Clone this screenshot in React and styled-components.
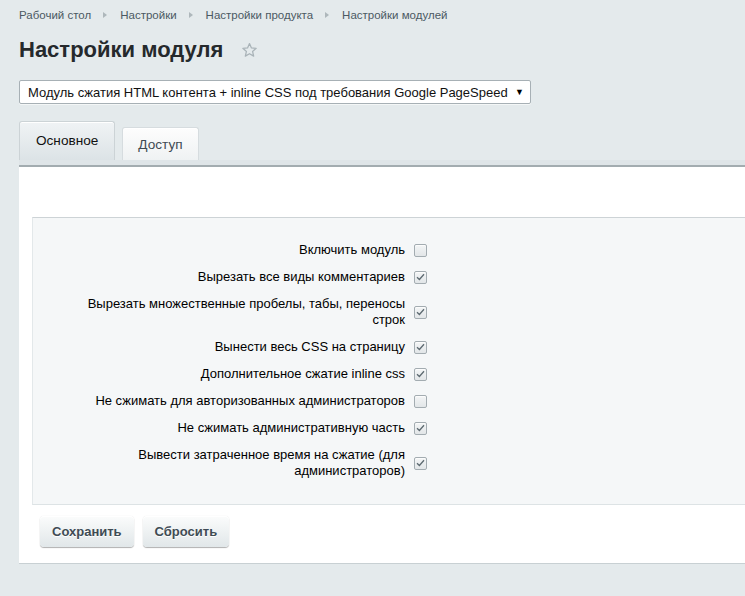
import React from 'react';
import styled, { createGlobalStyle } from 'styled-components';

const GlobalStyle = createGlobalStyle`
  html, body {
    margin: 0;
    padding: 0;
    background: #e4eaec;
    overflow: hidden;
  }
  body {
    font-family: "Liberation Sans", Arial, sans-serif;
    font-size: 13px;
    color: #000;
  }
`;

const Page = styled.div`
  width: 800px;
  padding: 8px 0 0 19px;
  min-height: 596px;
  box-sizing: border-box;
`;

const Crumbs = styled.div`
  display: flex;
  align-items: center;
  height: 14px;
  font-size: 11.5px;
  line-height: 14px;
  color: #4b5963;
`;

const CrumbArrow = styled.span`
  width: 0;
  height: 0;
  margin: 0 13px 0 12px;
  border-top: 3.5px solid transparent;
  border-bottom: 3.5px solid transparent;
  border-left: 4px solid #aeb7bb;
`;

const TitleRow = styled.div`
  display: flex;
  align-items: center;
  margin-top: 14px;
  height: 28px;
  gap: 18px;
`;

const Title = styled.h1`
  margin: 0;
  font-size: 22px;
  font-weight: bold;
  color: #25292c;
  line-height: 28px;
`;

const Select = styled.div`
  margin-top: 16px;
  width: 512px;
  height: 24px;
  box-sizing: border-box;
  border: 1px solid #a7b0b5;
  border-radius: 2px;
  background: #fff;
  display: flex;
  align-items: center;
  justify-content: space-between;
  padding: 0 6px 0 8px;
  font-size: 13px;
  color: #111;
  box-shadow: 0 1px 0 rgba(255, 255, 255, 0.6);
`;

const SelectArrow = styled.span`
  font-size: 9px;
  color: #000;
`;

const Tabs = styled.div`
  display: flex;
  align-items: flex-end;
  gap: 7px;
  margin-top: 17px;
`;

const Tab = styled.div`
  box-sizing: border-box;
  height: ${p => (p.$active ? '39px' : '33px')};
  padding: ${p => (p.$active ? '0 16px' : '0 15px')};
  display: flex;
  align-items: center;
  padding-bottom: ${p => (p.$active ? '2px' : '0')};
  font-size: 13.6px;
  color: ${p => (p.$active ? '#111' : '#3f4b54')};
  border: 1px solid ${p => (p.$active ? '#ccd3d6' : '#d6dcdf')};
  border-bottom: none;
  border-radius: 3px 3px 0 0;
  background: ${p =>
    p.$active
      ? 'linear-gradient(#f0f3f5, #dce3e6)'
      : 'linear-gradient(#fdfdfd, #eff2f3)'};
  box-shadow: inset 0 1px #fff;
`;

const TabStrip = styled.div`
  height: 5px;
  background: #dfe5e8;
  border-bottom: 2px solid #a3acb0;
`;

const Panel = styled.div`
  background: #fff;
  padding: 50px 0 0 13px;
  border-bottom: 1px solid #c8d0d3;
`;

const Form = styled.div`
  background: #f5f7f8;
  border-top: 1px solid #cdd3d6;
  border-left: 1px solid #e3e8ea;
  border-bottom: 1px solid #dde3e5;
  padding: 19px 0 19px;
`;

const Row = styled.div`
  display: flex;
  align-items: center;
  gap: 9px;
  padding: 5px 0 6px 50px;
`;

const Label = styled.div`
  width: 322px;
  text-align: right;
  line-height: 16px;
  font-size: 13px;
  color: #000;
`;

const Box = styled.span`
  width: 13px;
  height: 13px;
  box-sizing: border-box;
  border: 1px solid #a3acb1;
  border-radius: 2px;
  background: linear-gradient(#f3f5f6, #e2e6e8);
  box-shadow: inset 0 1px 1px rgba(255, 255, 255, 0.8);
  display: flex;
  align-items: center;
  justify-content: center;
  flex-shrink: 0;
`;

const Buttons = styled.div`
  display: flex;
  gap: 9px;
  padding: 11px 0 16px 8px;
`;

const Button = styled.button`
  height: 31px;
  padding: 0 12px;
  border: none;
  border-radius: 4px;
  font-family: "Liberation Sans", Arial, sans-serif;
  font-size: 13px;
  font-weight: bold;
  color: #3f4b54;
  text-shadow: 0 1px #fff;
  background: linear-gradient(#fbfcfc, #e1e7e9);
  box-shadow: 0 0 1px rgba(0, 0, 0, 0.15), 0 1px 1px rgba(0, 0, 0, 0.3),
    inset 0 1px #fff;
`;

const Star = () => (
  <svg width="17" height="16" viewBox="0 0 24 23">
    <path
      d="M12 2.2l2.8 6.3 6.8.6-5.2 4.5 1.6 6.7L12 16.8l-6 3.5 1.6-6.7-5.2-4.5 6.8-.6z"
      fill="none"
      stroke="#a9b3b8"
      strokeWidth="1.8"
      strokeLinejoin="round"
    />
  </svg>
);

const Check = () => (
  <svg width="9" height="8" viewBox="0 0 9 8">
    <path d="M1 4.2l2.4 2.3L8 1.3" fill="none" stroke="#5d6a71" strokeWidth="1.3" />
  </svg>
);

const options = [
  { label: 'Включить модуль', checked: false },
  { label: 'Вырезать все виды комментариев', checked: true },
  { label: 'Вырезать множественные пробелы, табы, переносы строк', checked: true },
  { label: 'Вынести весь CSS на страницу', checked: true },
  { label: 'Дополнительное сжатие inline css', checked: true },
  { label: 'Не сжимать для авторизованных администраторов', checked: false },
  { label: 'Не сжимать административную часть', checked: true },
  { label: 'Вывести затраченное время на сжатие (для администраторов)', checked: true },
];

const crumbs = ['Рабочий стол', 'Настройки', 'Настройки продукта', 'Настройки модулей'];

export default function App() {
  return (
    <>
      <GlobalStyle />
      <Page>
        <Crumbs>
          {crumbs.map((c, i) => (
            <React.Fragment key={c}>
              {i > 0 && <CrumbArrow />}
              <span>{c}</span>
            </React.Fragment>
          ))}
        </Crumbs>
        <TitleRow>
          <Title>Настройки модуля</Title>
          <Star />
        </TitleRow>
        <Select>
          <span>Модуль сжатия HTML контента + inline CSS под требования Google PageSpeed</span>
          <SelectArrow>▼</SelectArrow>
        </Select>
        <Tabs>
          <Tab $active>Основное</Tab>
          <Tab>Доступ</Tab>
        </Tabs>
        <TabStrip />
        <Panel>
          <Form>
            {options.map(o => (
              <Row key={o.label}>
                <Label>{o.label}</Label>
                <Box>{o.checked && <Check />}</Box>
              </Row>
            ))}
          </Form>
          <Buttons>
            <Button>Сохранить</Button>
            <Button>Сбросить</Button>
          </Buttons>
        </Panel>
      </Page>
    </>
  );
}
